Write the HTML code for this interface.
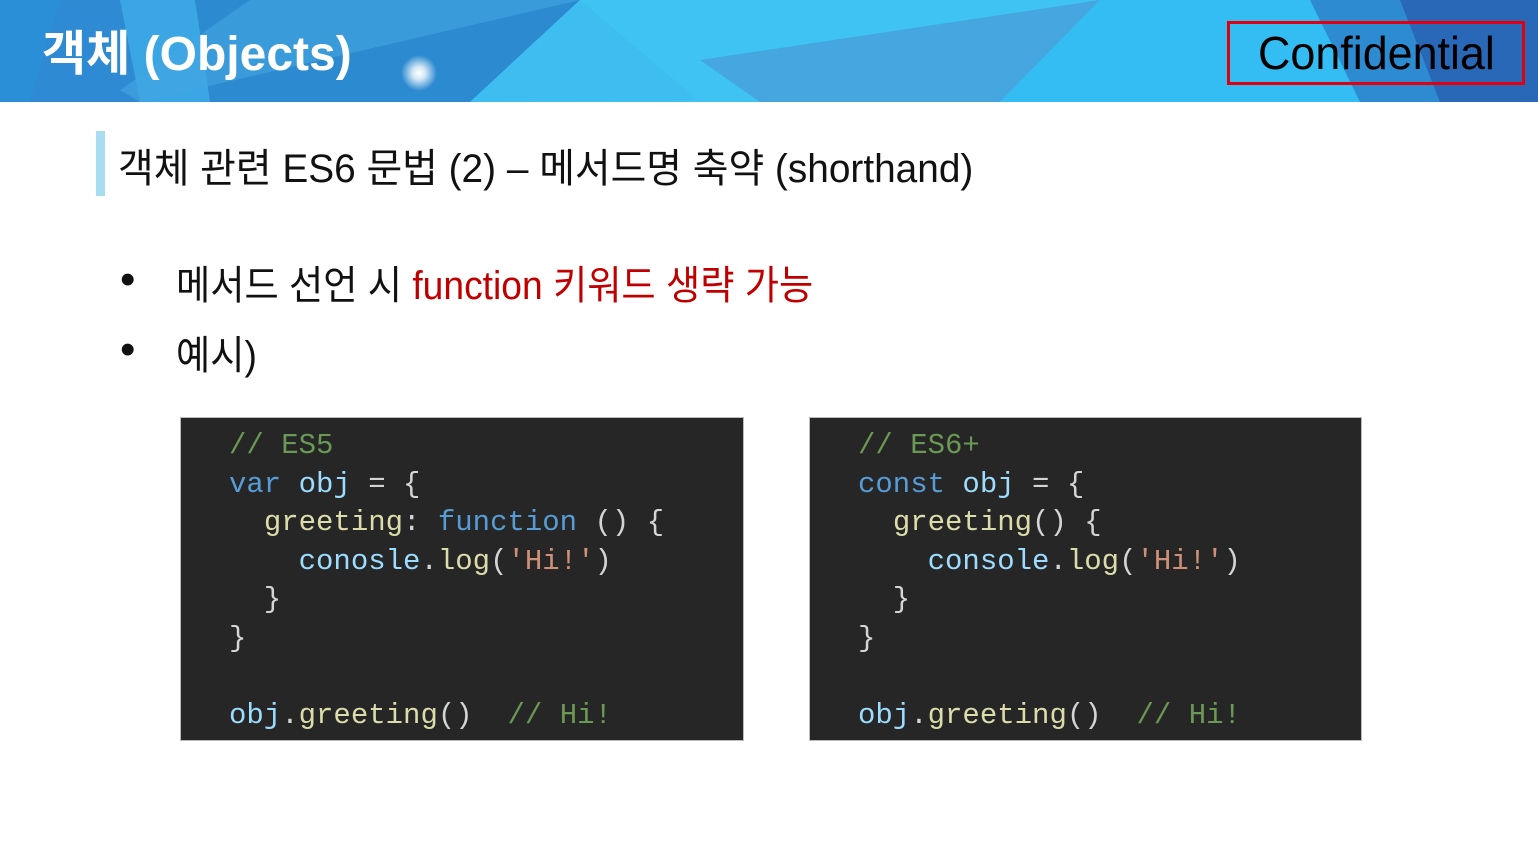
<!DOCTYPE html>
<html><head><meta charset="utf-8"><style>
body{margin:0;width:1538px;height:866px;background:#fff;position:relative;overflow:hidden;font-family:"Liberation Sans","Noto Sans CJK KR",sans-serif}
.hdr{position:absolute;left:0;top:0;width:1538px;height:102px;overflow:hidden;background:#3ec3f2}
.t{position:absolute;white-space:nowrap;transform-origin:left top}
.code{position:absolute;background:#262626;font-family:"Liberation Mono",monospace;font-size:29px;line-height:38.5px;white-space:pre;color:#d4d4d4;border:1px solid #bbb;box-sizing:border-box}
.c{color:#6a9955}.k{color:#569cd6}.v{color:#9cdcfe}.f{color:#dcdcaa}.s{color:#ce9178}
</style></head><body>
<div class="hdr">
<svg width="1538" height="102" style="position:absolute;left:0;top:0">
<defs><radialGradient id="g"><stop offset="0" stop-color="#fff"/><stop offset=".35" stop-color="#fff" stop-opacity=".8"/><stop offset="1" stop-color="#fff" stop-opacity="0"/></radialGradient></defs>
<polygon points="0,0 60,0 40,102 0,102" fill="#2a8fd6"/>
<polygon points="60,0 200,0 140,102 30,102" fill="#2e8ad3"/>
<polygon points="120,0 195,0 210,102 140,102" fill="#3aa6e4"/>
<polygon points="195,0 580,0 470,102 210,102" fill="#2c8ad0"/>
<polygon points="250,0 580,0 140,102 120,90" fill="#44a7e2" opacity=".6"/>
<polygon points="580,0 700,100 470,102" fill="#3dbdf0"/>
<polygon points="580,0 750,0 750,102 700,102" fill="#3ec3f2"/>
<polygon points="700,60 1100,0 1000,102 760,102" fill="#46a6df"/>
<polygon points="1100,0 1540,0 1540,102 1000,102" fill="#33bdf2"/>
<polygon points="1310,0 1538,0 1538,102 1360,102" fill="#2d8bd2"/>
<polygon points="1400,0 1538,0 1538,102 1440,102" fill="#2868b7"/>
<circle cx="419" cy="73" r="18" fill="url(#g)"/>
</svg>
<div class="t" style="left:42px;top:14px;font-size:48px;color:#fff;font-weight:bold;transform:scaleX(1.0)">객체 (Objects)</div>
<div style="position:absolute;left:1227px;top:21px;width:292px;height:58px;border:3px solid #e00010;"></div>
<div class="t" style="left:1258px;top:26px;font-size:46px;color:#000;transform:scaleX(.975)">Confidential</div>
</div>
<div style="position:absolute;left:96px;top:131px;width:9px;height:65px;background:#a8dcf0"></div>
<div class="t" style="left:118px;top:136px;font-size:40px;color:#111;transform:scaleX(.97)">객체 관련 ES6 문법 (2) – 메서드명 축약 (shorthand)</div>
<div class="t" style="left:120px;top:255px;font-size:44px;color:#111">•</div>
<div class="t" style="left:120px;top:325px;font-size:44px;color:#111">•</div>
<div class="t" style="left:176px;top:253px;font-size:40px;color:#111;transform:scaleX(.93)">메서드 선언 시 <span style="color:#c00000">function 키워드 생략 가능</span></div>
<div class="t" style="left:176px;top:323px;font-size:40px;color:#111;transform:scaleX(.93)">예시)</div>
<div class="code" style="left:180px;top:417px;width:564px;height:324px;padding:9px 0 0 48px"><span class="c">// ES5</span>
<span class="k">var</span> <span class="v">obj</span> = {
  <span class="f">greeting</span>: <span class="k">function</span> () {
    <span class="v">conosle</span>.<span class="f">log</span>(<span class="s">'Hi!'</span>)
  }
}

<span class="v">obj</span>.<span class="f">greeting</span>()  <span class="c">// Hi!</span></div>
<div class="code" style="left:809px;top:417px;width:553px;height:324px;padding:9px 0 0 48px"><span class="c">// ES6+</span>
<span class="k">const</span> <span class="v">obj</span> = {
  <span class="f">greeting</span>() {
    <span class="v">console</span>.<span class="f">log</span>(<span class="s">'Hi!'</span>)
  }
}

<span class="v">obj</span>.<span class="f">greeting</span>()  <span class="c">// Hi!</span></div>
</body></html>
